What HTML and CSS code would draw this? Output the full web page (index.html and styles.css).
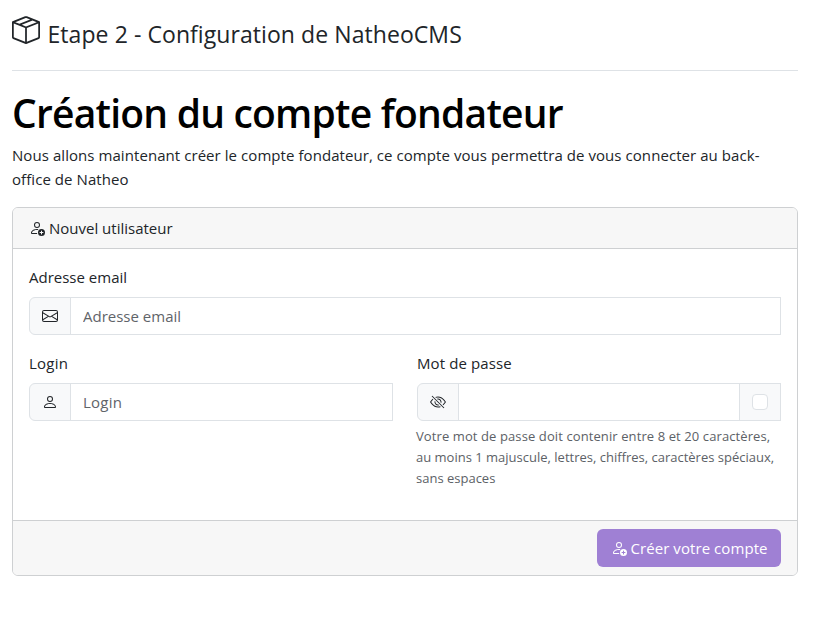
FILE: index.html
```html
<!DOCTYPE html>
<html lang="fr">
<head>
<meta charset="utf-8">
<title>NatheoCMS</title>
<link rel="stylesheet" href="styles.css">
</head>
<body>
<svg class="sprite" aria-hidden="true">
  <symbol id="person-add" viewBox="0 0 16 16"><path d="M12.5 16a3.5 3.5 0 1 0 0-7 3.5 3.5 0 0 0 0 7m.5-5v1h1a.5.5 0 0 1 0 1h-1v1a.5.5 0 0 1-1 0v-1h-1a.5.5 0 0 1 0-1h1v-1a.5.5 0 0 1 1 0m-2-6a3 3 0 1 1-6 0 3 3 0 0 1 6 0M8 7a2 2 0 1 0 0-4 2 2 0 0 0 0 4"/><path d="M8.256 14a4.5 4.5 0 0 1-.229-1.004H3c.001-.246.154-.986.832-1.664C4.484 10.68 5.711 10 8 10q.39 0 .74.025c.226-.341.496-.65.804-.918Q8.844 9.002 8 9c-5 0-6 3-6 4s1 1 1 1z"/></symbol>
</svg>
<main class="page">
  <header class="step">
    <svg class="step-icon" viewBox="0 0 16 16"><path d="M8.186 1.113a.5.5 0 0 0-.372 0L1.846 3.5l2.404.961L10.404 2zm3.564 1.426L5.596 5 8 5.961 14.154 3.5zm3.25 1.7-6.5 2.6v7.922l6.5-2.6V4.24zM7.5 14.762V6.838L1 4.239v7.923zM7.443.184a1.5 1.5 0 0 1 1.114 0l7.129 2.852A.5.5 0 0 1 16 3.5v8.662a1 1 0 0 1-.629.928l-7.185 2.874a.5.5 0 0 1-.372 0L.63 13.09a1 1 0 0 1-.63-.928V3.5a.5.5 0 0 1 .314-.464z"/></svg>
    <span class="step-title">Etape 2 - Configuration de NatheoCMS</span>
  </header>
  <h1 class="title">Création du compte fondateur</h1>
  <p class="lead">Nous allons maintenant créer le compte fondateur, ce compte vous permettra de vous connecter au back-<br>office de Natheo</p>
  <section class="card">
    <div class="card-header"><svg class="icon"><use href="#person-add"/></svg><span class="card-title">Nouvel utilisateur</span></div>
    <div class="card-body">
      <div class="field">
        <label class="label" for="email">Adresse email</label>
        <div class="group">
          <span class="addon"><svg class="icon" viewBox="0 0 16 16"><path d="M0 4a2 2 0 0 1 2-2h12a2 2 0 0 1 2 2v8a2 2 0 0 1-2 2H2a2 2 0 0 1-2-2zm2-1a1 1 0 0 0-1 1v.217l7 4.2 7-4.2V4a1 1 0 0 0-1-1zm13 2.383-4.708 2.825L15 11.105zm-.034 6.876-5.64-3.471L8 9.583l-1.326-.795-5.64 3.47A1 1 0 0 0 2 13h12a1 1 0 0 0 .966-.741M1 11.105l4.708-2.897L1 5.383z"/></svg></span>
          <input class="input" id="email" type="email" placeholder="Adresse email">
        </div>
      </div>
      <div class="row">
        <div class="field">
          <label class="label label-short" for="login">Login</label>
          <div class="group">
            <span class="addon"><svg class="icon" viewBox="0 0 16 16"><path d="M8 8a3 3 0 1 0 0-6 3 3 0 0 0 0 6m2-3a2 2 0 1 1-4 0 2 2 0 0 1 4 0m4 8c0 1-1 1-1 1H3s-1 0-1-1 1-4 6-4 6 3 6 4m-1-.004c-.001-.246-.154-.986-.832-1.664C11.516 10.68 10.289 10 8 10s-3.516.68-4.168 1.332c-.678.678-.83 1.418-.832 1.664z"/></svg></span>
            <input class="input input-short" id="login" type="text" placeholder="Login">
          </div>
        </div>
        <div class="field">
          <label class="label label-password" for="password">Mot de passe</label>
          <div class="group">
            <span class="addon"><svg class="icon" viewBox="0 0 16 16"><path d="M13.359 11.238C15.06 9.72 16 8 16 8s-3-5.5-8-5.5a7 7 0 0 0-2.79.588l.77.771A6 6 0 0 1 8 3.5c2.12 0 3.879 1.168 5.168 2.457A13 13 0 0 1 14.828 8q-.086.13-.195.288c-.335.48-.83 1.12-1.465 1.755q-.247.248-.517.486z"/><path d="M11.297 9.176a3.5 3.5 0 0 0-4.474-4.474l.823.823a2.5 2.5 0 0 1 2.829 2.829zm-2.943 1.299.822.822a3.5 3.5 0 0 1-4.474-4.474l.823.823a2.5 2.5 0 0 0 2.829 2.829"/><path d="M3.35 5.47q-.27.24-.518.487A13 13 0 0 0 1.172 8l.195.288c.335.48.83 1.12 1.465 1.755C4.121 11.332 5.881 12.5 8 12.5c.716 0 1.39-.133 2.02-.36l.77.772A7 7 0 0 1 8 13.5C3 13.5 0 8 0 8s.939-1.721 2.641-3.238l.708.709zm10.296 8.884-12-12 .708-.708 12 12z"/></svg></span>
            <input class="input" id="password" type="password">
            <span class="addon addon-end"><input class="check" type="checkbox"></span>
          </div>
          <div class="help"><span class="help-wide">Votre mot de passe doit contenir entre 8 et 20 caractères,</span><br>au moins 1 majuscule, lettres, chiffres, caractères spéciaux,<br>sans espaces</div>
        </div>
      </div>
    </div>
    <div class="card-footer"><button class="button" type="button"><svg class="icon"><use href="#person-add"/></svg><span class="button-text">Créer votre compte</span></button></div>
  </section>
</main>
</body>
</html>
```
FILE: styles.css
```css
* { box-sizing: border-box; }
body { margin: 0; background: #fff; color: #212529; font: 400 15px/24px "Open Sans", "Noto Sans", sans-serif; }
.sprite { display: none; }
.page { width: 786px; margin-left: 12px; }
.icon { display: block; flex: none; width: 16px; height: 16px; fill: currentColor; }
.step { display: flex; height: 71px; padding-top: 16px; border-bottom: 1px solid #dee2e6; white-space: nowrap; }
.step-icon { flex: none; width: 28px; height: 28px; margin-left: -.5px; fill: #212529; }
.step-title { margin: 4px 0 0 8px; font-size: 23px; line-height: 29px; letter-spacing: .07px; }
.title { margin: 18px 0 6px; color: #000; font-size: 39px; font-weight: 600; line-height: 48px; letter-spacing: -.78px; white-space: nowrap; }
.lead { margin: 0 0 16px; height: 48px; letter-spacing: .065px; white-space: nowrap; }
.card { border: 1px solid #ced0d2; border-radius: 6px; overflow: hidden; }
.card-header { display: flex; align-items: center; gap: 4px; height: 41px; padding-left: 16px; background: #f7f7f7; border-bottom: 1px solid #ced0d2; }
.card-body { height: 271px; padding: 16px; }
.label { display: block; width: max-content; height: 32px; }
.label-short { letter-spacing: .25px; }
.label-password { letter-spacing: .1px; }
.group { display: flex; height: 38px; }
.addon { display: flex; flex: none; align-items: center; justify-content: center; width: 42px; background: #f8f9fa; border: 1px solid #dee2e6; border-radius: 6px 0 0 6px; }
.addon .icon { margin-right: 1px; }
.addon-end { border-radius: 0; }
.input { flex: 1; min-width: 0; margin: 0 0 0 -1px; padding: 0 12px 1px; border: 1px solid #dee2e6; border-radius: 0; background: #fff; color: inherit; font: inherit; }
.input-short { letter-spacing: .25px; }
.input + .addon { margin-left: -1px; }
.input::placeholder { color: #5f6469; opacity: 1; }
.check { appearance: none; width: 16px; height: 16px; margin: 0; border: 1px solid #dee2e6; border-radius: 4px; background: #fff; }
.row { display: grid; grid-template-columns: 1fr 1fr; gap: 24px; margin-top: 16px; }
.help { margin: 5px 0 0 -1px; color: #5c6166; font-size: 13px; line-height: 21px; white-space: nowrap; }
.help-wide { letter-spacing: .1px; }
.card-footer { display: flex; justify-content: flex-end; height: 55px; padding: 8px 16px; background: #f7f7f7; border-top: 1px solid #ced0d2; }
.button { display: flex; align-items: center; gap: 4px; width: 184px; height: 38px; padding: 0 0 0 13.5px; border: 0; border-radius: 6px; background: #9f80d4; color: #fff; font: inherit; letter-spacing: .07px; white-space: nowrap; }
```
